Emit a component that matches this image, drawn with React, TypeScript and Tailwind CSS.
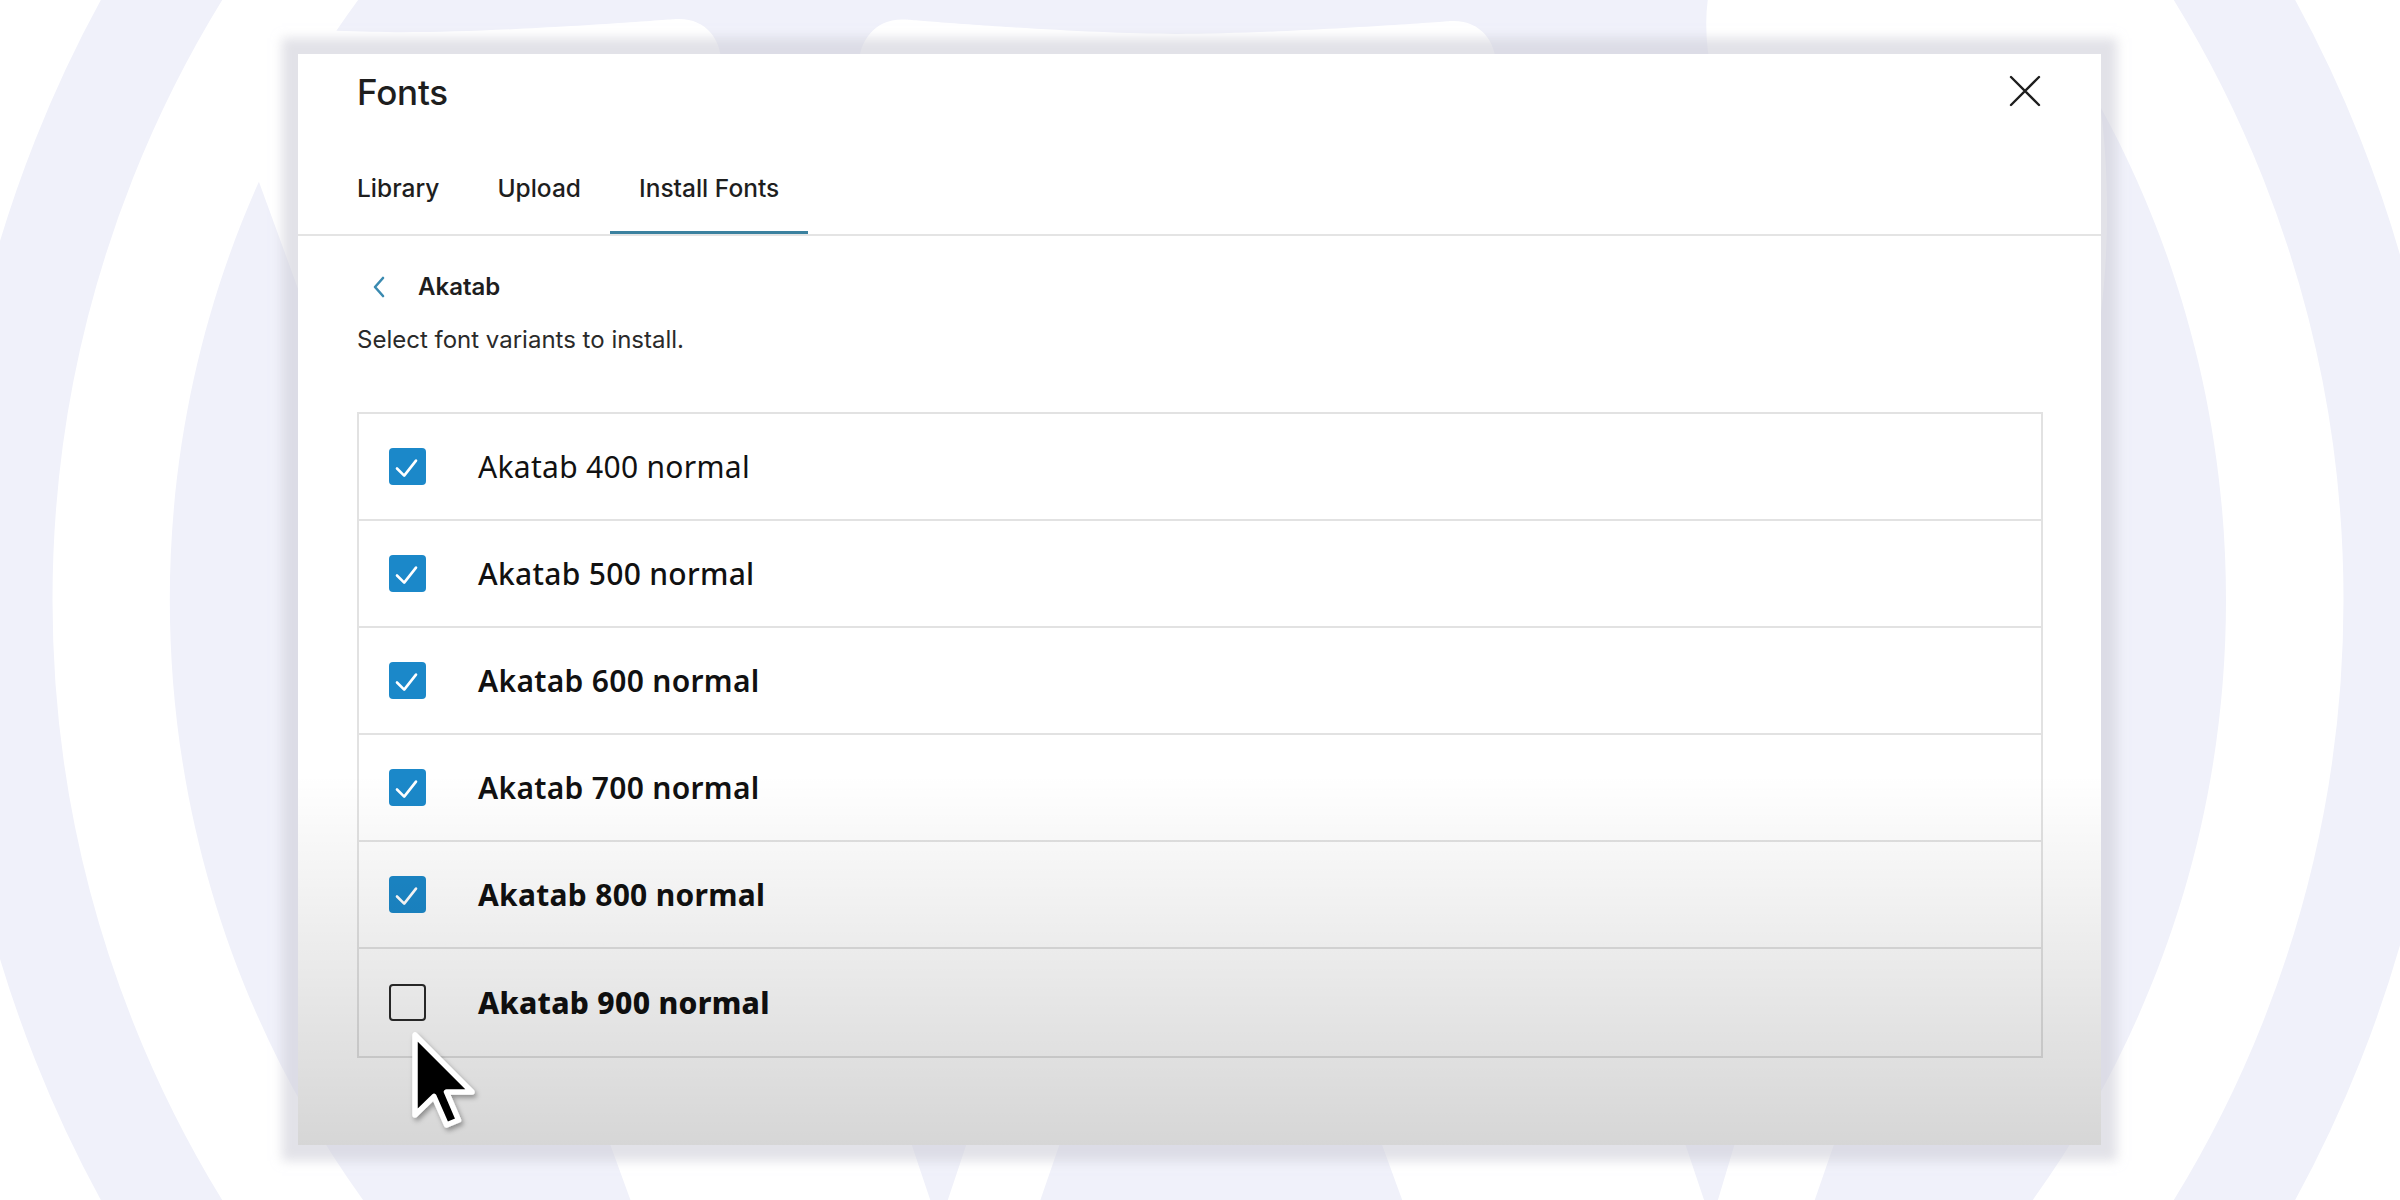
import React from "react";

const LAV = "#f0f1fa";

const W_PATH =
  "M21.469 6.825c.84 1.537 1.318 3.3 1.318 5.175 0 3.979-2.156 7.456-5.363 9.325l3.295-9.527c.615-1.54.82-2.771.82-3.864 0-.405-.026-.78-.07-1.11m-7.981.105c.647-.03 1.232-.105 1.232-.105.582-.075.514-.93-.067-.899 0 0-1.755.135-2.88.135-1.064 0-2.85-.15-2.85-.15-.585-.03-.661.855-.075.885 0 0 .54.061 1.125.09l1.68 4.605-2.37 7.08L5.354 6.9c.649-.03 1.234-.1 1.234-.1.585-.075.516-.93-.065-.896 0 0-1.746.138-2.874.138-.2 0-.438-.008-.69-.015C4.911 3.15 8.235 1.215 12 1.215c2.809 0 5.365 1.072 7.286 2.833-.046-.003-.091-.009-.141-.009-1.06 0-1.812.923-1.812 1.914 0 .89.513 1.643 1.06 2.531.411.72.89 1.643.89 2.977 0 .915-.354 1.994-.821 3.479l-1.075 3.585-3.9-11.61.001.014zM12 22.784c-1.059 0-2.081-.153-3.048-.437l3.237-9.406 3.315 9.087c.024.053.05.101.078.149-1.12.393-2.325.609-3.582.609M1.211 12c0-1.564.336-3.05.935-4.39L7.29 21.709C3.694 19.96 1.212 16.271 1.211 12";

function Background() {
  return (
    <svg
      className="absolute inset-0"
      width="2400"
      height="1200"
      viewBox="0 0 2400 1200"
    >
      <circle cx="1198" cy="600" r="1198" fill="none" stroke={LAV} strokeWidth="105" />
      <path transform="translate(54.4 -543.6) scale(95.3)" fill={LAV} d={W_PATH} />
    </svg>
  );
}

function CheckBox({ checked }: { checked: boolean }) {
  if (checked) {
    return (
      <div className="w-[37px] h-[37px] shrink-0 rounded-[4px] bg-[#1b88c9] flex items-center justify-center">
        <svg width="37" height="37" viewBox="0 0 37 37">
          <path
            d="M8 20.5 L15.2 27.6 L27 12.6"
            fill="none"
            stroke="#ffffff"
            strokeWidth="2.6"
            strokeLinecap="round"
            strokeLinejoin="round"
          />
        </svg>
      </div>
    );
  }
  return <div className="w-[37px] h-[37px] shrink-0 rounded-[4px] border-[2.5px] border-[#2b2b2b]" />;
}

const rows = [
  { w: "font-normal", label: "Akatab 400 normal", checked: true },
  { w: "font-medium", label: "Akatab 500 normal", checked: true },
  { w: "font-[570]", label: "Akatab 600 normal", checked: true },
  { w: "font-[640]", label: "Akatab 700 normal", checked: true },
  { w: "font-[730]", label: "Akatab 800 normal", checked: true },
  { w: "font-[820]", label: "Akatab 900 normal", checked: false },
];

function Cursor() {
  return (
    <svg
      className="absolute left-[405px] top-[1025px]"
      width="80"
      height="110"
      viewBox="-2 -2 16 22"
    >
      <defs>
        <filter id="cs" x="-50%" y="-50%" width="200%" height="200%">
          <feDropShadow dx="0.4" dy="0.6" stdDeviation="0.5" floodColor="#000" floodOpacity="0.35" />
        </filter>
      </defs>
      <path
        d="M0 0 L0 16 L3.8 12.3 L6.3 18 L8.7 17 L6.3 11.4 L11.4 11.4 Z"
        fill="#000"
        stroke="#fff"
        strokeWidth="1.1"
        strokeLinejoin="round"
        filter="url(#cs)"
      />
    </svg>
  );
}

export default function App() {
  return (
    <div className="relative w-[2400px] h-[1200px] overflow-hidden bg-white font-['Inter',sans-serif] text-[#1e1e1e]">
      <Background />
      <div className="relative pl-[298px] pt-[54px]">
        <div className="relative w-[1803px] h-[1091px] bg-white shadow-[0_0_10px_16px_rgba(206,206,216,0.6)] flex flex-col">
          {/* Header */}
          <div className="h-[76px] flex items-center justify-between pl-[59px] pr-[60px]">
            <h1 className="text-[35px] font-medium tracking-[-0.2px]">Fonts</h1>
            <svg width="32" height="32" viewBox="0 0 32 32" className="mt-[-2px]">
              <path d="M2 2 L30 30 M30 2 L2 30" stroke="#1e1e1e" strokeWidth="2.4" strokeLinecap="round" />
            </svg>
          </div>
          {/* Tabs */}
          <div className="mt-[12px] h-[94px] flex pl-[30px] border-b-[2px] border-[#e4e4e4]">
            <div className="px-[29px] h-[92px] flex items-center text-[24.5px] font-medium">Library</div>
            <div className="px-[29px] h-[92px] flex items-center text-[24.5px] font-medium">Upload</div>
            <div className="px-[29px] h-[92px] flex items-center text-[24.5px] font-medium shadow-[inset_0_-3px_0_#3b819f]">
              Install Fonts
            </div>
          </div>
          {/* Content */}
          <div className="pl-[59px] pr-[58px] pt-[31px] flex flex-col">
            <div className="h-[40px] flex items-center">
              <svg width="40" height="40" viewBox="0 0 40 40" className="shrink-0">
                <path
                  d="M26 11 L18 20 L26 29"
                  fill="none"
                  stroke="#3a8ab0"
                  strokeWidth="2.6"
                  strokeLinecap="round"
                  strokeLinejoin="round"
                />
              </svg>
              <span className="ml-[21px] text-[24px] font-semibold">Akatab</span>
            </div>
            <p className="mt-[17px] h-[32px] leading-[32px] text-[24px] text-[#2a2a2a]">
              Select font variants to install.
            </p>
            <div className="mt-[56px] border-[2px] border-[#e2e2e2] flex flex-col">
              {rows.map((r, i) => (
                <div
                  key={r.label}
                  className={
                    "h-[107px] flex items-center pl-[30px] " +
                    (i < rows.length - 1 ? "border-b-[2px] border-[#e2e2e2]" : "")
                  }
                >
                  <CheckBox checked={r.checked} />
                  <span
                    className={
                      "ml-[52px] text-[30px] tracking-[0.3px] font-['Noto_Sans',sans-serif] text-[#111] " + r.w
                    }
                  >
                    {r.label}
                  </span>
                </div>
              ))}
            </div>
          </div>
          <div className="pointer-events-none absolute inset-0 bg-linear-to-b from-transparent from-[66%] to-[rgba(0,0,0,0.16)]" />
        </div>
      </div>
      <Cursor />
    </div>
  );
}
